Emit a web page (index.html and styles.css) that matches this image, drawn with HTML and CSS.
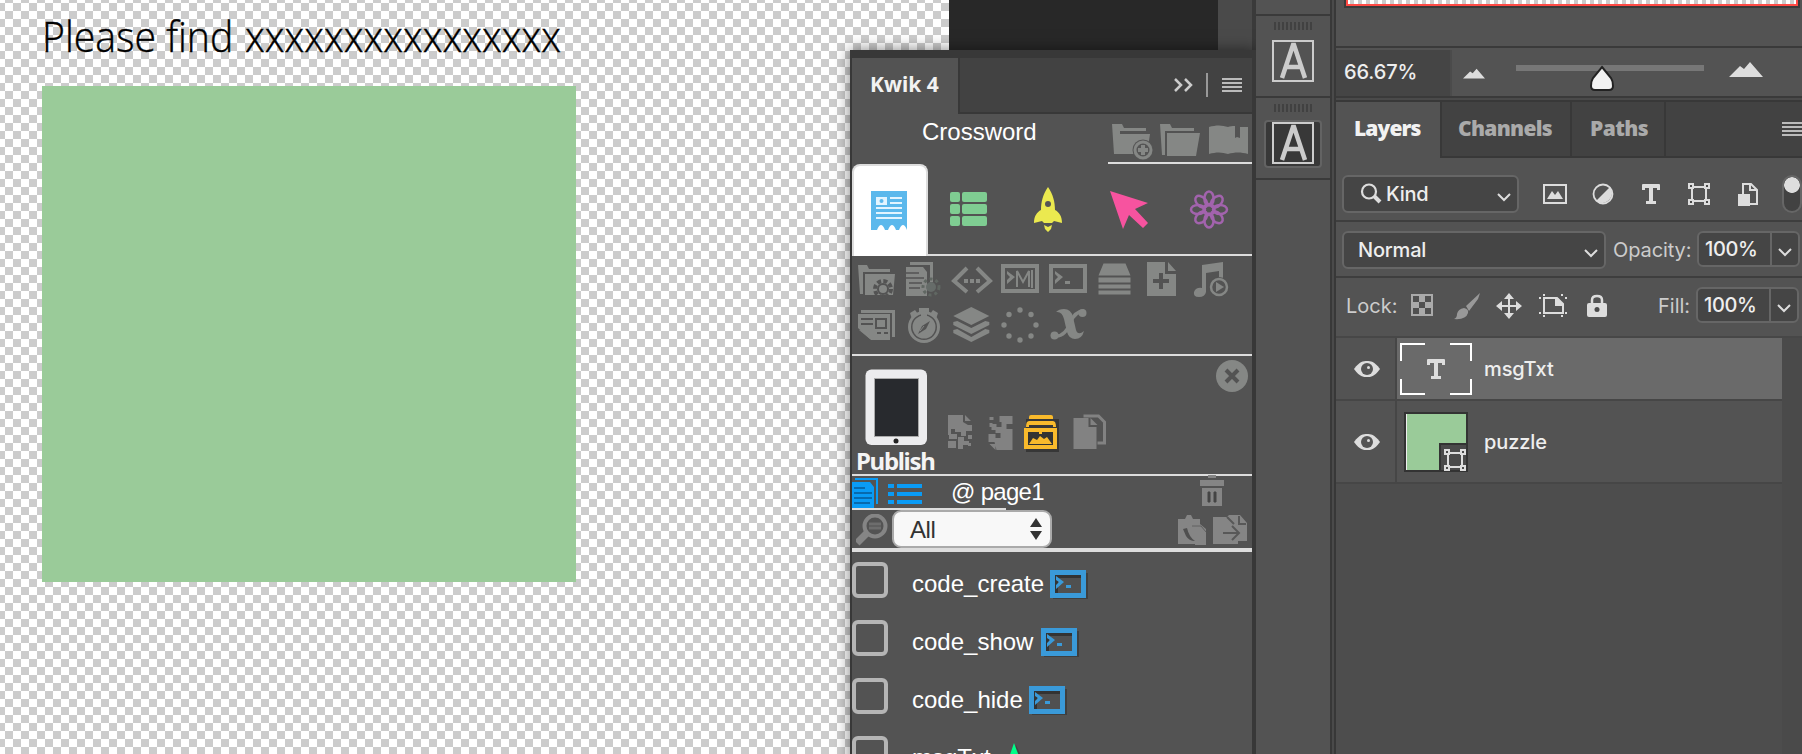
FILE: index.html
```html
<!DOCTYPE html>
<html lang="en">
<head>
<meta charset="utf-8">
<title>Kwik 4 workspace</title>
<link rel="stylesheet" href="styles.css">
</head>
<body>
<svg class="defs" width="0" height="0">
  <symbol id="bounds" viewBox="0 0 22 22"><path d="M4 4h14v14H4z" fill="none" stroke="#ddd" stroke-width="2"/><path d="M1 1h4v4H1zM17 1h4v4h-4zM1 17h4v4H1zM17 17h4v4h-4z" fill="#4a4a4a" stroke="#ddd" stroke-width="2"/></symbol>
  <symbol id="eye" viewBox="0 0 26 18"><path d="M0 9C6 1 9 1 13 1s7 0 13 8c-6 8-9 8-13 8S6 17 0 9z" fill="#ddd"/><circle cx="13" cy="9" r="6" fill="#555"/><circle cx="14.500" cy="7.500" r="1.500" fill="#ddd"/></symbol>
  <symbol id="chev" viewBox="0 0 14 10"><path d="M1 2l6 6 6-6" fill="none" stroke="#ddd" stroke-width="2"/></symbol>
  <symbol id="tee" viewBox="0 0 20 20"><path d="M2 0h16q1 0 1 1v5h-3V4h-4v13h3v3H5v-3h3V4H4v2H1V1q0-1 1-1z" fill="#ddd"/></symbol>
  <symbol id="lines" viewBox="0 0 20 14"><path d="M0 1h20M0 5h20M0 9h20M0 13h20" stroke="#bbb" stroke-width="2"/></symbol>
  <symbol id="term" viewBox="0 0 42 34"><path d="M6 6h35v26H6z" fill="#222" opacity=".4"/><path d="M3 3h36v28H3z" fill="#3a9ad9"/><path d="M8 8h26v18H8z" fill="#505050"/><path d="M8 8h26v3H11v15H8z" fill="#333"/><path d="M9 9l8 6-8 7v-4l3-3-3-2z" fill="#3a9ad9"/><rect x="19" y="18" width="5" height="3" fill="#3a9ad9"/></symbol>
</svg>
<div class="app">
  <main class="canvas">
    <p class="message"><span class="m1">Please find</span><span class="m2">xxxxxxxxxxxxxxxx</span></p>
    <div class="puzzle"></div>
    <div class="backdrop"><div class="backdrop-side"></div></div>
  </main>

  <section class="kwik">
    <header class="kwik-head"><div class="kwik-tab">Kwik 4</div>
      <svg class="more" width="20" height="16" viewBox="0 0 20 16"><path d="M1 2l6 6-6 6M11 2l6 6-6 6" fill="none" stroke="#ccc" stroke-width="2.500"/></svg>
      <i class="sep"></i><svg class="menu" width="20" height="14"><use href="#lines"/></svg>
    </header>
    <div class="project"><span class="project-name">Crossword</span>
      <div class="project-actions">
        <svg width="48" height="42" viewBox="0 0 48 42"><g fill="#858785"><path d="M4 4h10l2 4h22v3H12v23H6z"/><path d="M12 14h30l-3 20H12z"/><circle cx="35" cy="30" r="10.500" fill="#555"/><circle cx="35" cy="30" r="8" fill="none" stroke="#858785" stroke-width="3"/><path d="M33 25h4v3h3v4h-3v3h-4v-3h-3v-4h3z"/></g></svg>
        <svg width="48" height="42" viewBox="0 0 48 42"><g fill="#858785"><path d="M4 4h10l2 4h22v3H9v24H6z"/><path d="M11 13h33l-4 23H11z"/></g></svg>
        <svg width="48" height="42" viewBox="0 0 48 42"><path d="M5 7c7-2 13-2 19 0 2-1 4-1 7-1v12l2-1 3 1V7h8v27c-7-2-13-2-20 0-6-2-12-2-19 0z" fill="#858785"/></svg>
      </div>
    </div>
    <nav class="tabs">
      <div class="tab on"><svg width="40" height="44" viewBox="1 0 40 44"><path d="M2 2h36v39q-2-5-4-5t-4 5h-3q-2-5-4-5t-4 5h-3q-2-5-4-5t-4 5H2z" fill="#5bb8ec"/><path d="M7 8h11v8H7zM21 8h12v2H21zM21 13h12v2H21zM7 18h26v2H7zM7 23h26v2H7zM7 28h26v2H7z" fill="#e2f4ff"/><circle cx="12.500" cy="12" r="2" fill="#5bb8ec"/></svg></div>
      <div class="tab"><svg width="40" height="44" viewBox="0 0 40 44"><g fill="#7fcd92"><rect x="2" y="5" width="10" height="10" rx="2"/><rect x="14" y="5" width="25" height="10" rx="2"/><rect x="2" y="17" width="10" height="10" rx="2"/><rect x="14" y="17" width="25" height="10" rx="2"/><rect x="2" y="29" width="10" height="10" rx="2"/><rect x="14" y="29" width="25" height="10" rx="2"/></g></svg></div>
      <div class="tab"><svg width="40" height="48" viewBox="0 0 40 48"><path d="M20 2c5 7 7 15 7 23 4 2 7 6 7 13l-8-2-2 2h-8l-2-2-8 2c0-7 3-11 7-13 0-8 2-16 7-23zM16 40l4 2 4-2-1 4-3 3-3-3z" fill="#ebe94f"/><circle cx="20" cy="19" r="3" fill="#555"/></svg></div>
      <div class="tab"><svg width="42" height="44" viewBox="-1 0 42 44"><path d="M2 4l38 12-13 6 13 14-5 5-14-13-6 14z" fill="#f7539f"/></svg></div>
      <div class="tab"><svg width="42" height="42" viewBox="-22 -21.500 42 42"><g fill="none" stroke="#a263ad" stroke-width="2.500"><circle r="5.500"/><ellipse cy="-11" rx="4.600" ry="7"/><ellipse cy="-11" rx="4.600" ry="7" transform="rotate(45)"/><ellipse cy="-11" rx="4.600" ry="7" transform="rotate(90)"/><ellipse cy="-11" rx="4.600" ry="7" transform="rotate(135)"/><ellipse cy="-11" rx="4.600" ry="7" transform="rotate(180)"/><ellipse cy="-11" rx="4.600" ry="7" transform="rotate(225)"/><ellipse cy="-11" rx="4.600" ry="7" transform="rotate(270)"/><ellipse cy="-11" rx="4.600" ry="7" transform="rotate(315)"/></g></svg></div>
    </nav>
    <div class="tools">
      <svg viewBox="0 0 48 46"><path d="M6 9h9l2 4h21v3H11v22H8z"/><path d="M13 18h30l-2 21H13z"/><circle cx="31" cy="33" r="8" fill="none" stroke="#535353" stroke-width="4" stroke-dasharray="4 2.300"/><circle cx="31" cy="33" r="6" fill="#535353"/><circle cx="31" cy="33" r="4"/></svg>
      <svg viewBox="3 0 48 46"><path d="M13 6h23v20h-3V9H13z"/><path d="M9 11h17l4 5v24H9z"/><path d="M9 17h13M9 22h18M12 27h13M12 32h11" stroke="#535353" stroke-width="1.500"/><circle cx="34" cy="31" r="5" fill="#666c69"/><circle cx="34" cy="31" r="8" fill="none" stroke="#606762" stroke-width="3" stroke-dasharray="3 3"/></svg>
      <svg viewBox="0 0 48 46"><path d="M19 12L6 25l13 11M29 12l13 13-13 11" fill="none" stroke="#858785" stroke-width="4"/><path d="M16 23h4v4h-4zM22 23h4v4h-4zM28 23h4v4h-4z"/></svg>
      <svg viewBox="0 0 48 46"><path d="M7 10h34v25H7z" fill="none" stroke="#858785" stroke-width="4"/><path d="M11 15l8 6-8 7v-4l3-3-3-3z"/><path d="M21 31V15l6 11 6-11v16M36 14v18" fill="none" stroke="#858785" stroke-width="2"/></svg>
      <svg viewBox="0 0 48 46"><path d="M7 10h34v25H7z" fill="none" stroke="#858785" stroke-width="4"/><path d="M11 15l8 6-8 7v-4l3-3-3-3zM21 25h5v3h-5z"/></svg>
      <svg viewBox="1.500 .5 48 46"><path d="M13 8h22l5 12H8zM8 22h32v5H8zM8 29h32v4H8zM8 35h32v4H8z"/></svg>
      <svg viewBox="1 0 48 46"><path d="M8 6h18v12h11v22H8zM29 6l8 9h-8z"/><path d="M22 17v16M14 25h16" stroke="#535353" stroke-width="4"/></svg>
      <svg viewBox="1 0 48 46"><path d="M15 9l21-3v21h-4V15l-13 2v19q-1 5-7 5t-5-5q2-5 8-4z"/><circle cx="32" cy="31" r="10" fill="#535353"/><circle cx="32" cy="31" r="8" fill="none" stroke="#858785" stroke-width="2.500"/><path d="M29 26l8 5-8 5z"/></svg>
      <svg viewBox="0 0 48 46"><path d="M9 8h34v27h-3V11H9z"/><path d="M6 12h32v26H19L6 26z"/><path d="M9 17h12M9 22h12M24 17h10v9H24zM25 31h4M32 31h4" fill="none" stroke="#535353" stroke-width="2"/><path d="M7 28l10 1 1 8"/></svg>
      <svg viewBox="0 0 48 46"><path d="M19 6h10v4h-2v4h-6v-4h-2zM10 11l5-3 3 4-6 5zM38 11l-5-3-3 4 6 5z"/><circle cx="24" cy="25" r="14.500" fill="none" stroke="#858785" stroke-width="3"/><circle cx="24" cy="25" r="11.500"/><path d="M30 19l-4 8-8 5 4-8z" fill="#535353"/><path d="M24 24l-4 5" stroke="#858785"/></svg>
      <svg viewBox=".7 0 48 46"><path d="M24 5l18 9-18 9-18-9zM6 20l4-1 14 7 14-7 4 1v3l-18 9-18-9zM6 28l4-1 14 8 14-8 4 1v3l-18 9-18-9z"/></svg>
      <svg viewBox="0 0 48 46"><circle cx="24" cy="8" r="2.700"/><circle cx="35" cy="12.500" r="2.700"/><circle cx="40" cy="23" r="2.700"/><circle cx="35" cy="34" r="2.700"/><circle cx="24" cy="38" r="2.700"/><circle cx="13" cy="34" r="2.700"/><circle cx="8" cy="23" r="2.700"/><circle cx="13" cy="12.500" r="2.700"/></svg>
      <svg viewBox="0 0 48 46"><path d="M12 10q3-3 8-3 7 0 9 8l3 13q2 6 8 1-2 8-9 8-6 0-8-7l-3-13q-2-8-8-7z"/><path d="M40 9q-9 0-14 12-5 14-15 13" fill="none" stroke="#858785" stroke-width="3.500"/><circle cx="38.500" cy="11" r="4"/><circle cx="10.500" cy="33.500" r="4"/></svg>
    </div>
    <div class="publish">
      <div class="publish-btn"><svg width="64" height="78" viewBox="0 0 64 78"><rect x="1.500" y="1.500" width="61.500" height="75.500" rx="6" fill="#ececee"/><rect x="10" y="10" width="45" height="59" fill="#aaa"/><rect x="11" y="11" width="43" height="57" fill="#282a2e"/><circle cx="32" cy="73" r="2.500" fill="#222"/></svg><b>Publish</b></div>
      <div class="publish-icons">
        <svg width="40" height="40" viewBox="0 0 40 40"><path d="M8 2h15v7l5 3h4v6h-6v5h-5v-4h-6v-3h-4v5h6v5H9v-4H8zM25 2l6 6h-6zM8 28h8v7H8zM18 24h6v4h5v4h-6v4h-5zM28 22h4v4h-4zM28 30h3v3h-3z" fill="#828282"/></svg>
        <svg width="35" height="40" viewBox="-1.500 0 35 40"><path d="M18 3h13v8h-6v5h6v21H15l-2-8H7v-8h7v4h5v-5h-5v-3h-4v-6h5v3h5V9h-2zM8 4h4v3H8zM8 10h3v4H8zM8 31h6v6z" fill="#828282"/></svg>
        <svg width="52" height="42" viewBox="1 0 52 42"><path d="M12 6h33v33H12z" fill="#252525" opacity=".6"/><path d="M15 4q0-2 2-2h20q2 0 2 2v2H15zM12 14q0-6 3-6h24q3 0 3 6h-3v-2H15v2zM10 15h33v21H10z" fill="#f9ba2c"/><path d="M14 19h25v13H14z" fill="#333"/><path d="M15 31l4-6 4 2 3-4 4 3 3-2 5 7zM25 19h3v2h-3z" fill="#f9ba2c"/></svg>
        <svg width="42" height="40" viewBox="-1.500 0 42 40"><path d="M5 5h15v9h8v22H5zM22 5l7 7h-7z" fill="#828282"/><path d="M15 3h15l6 6v21h-7" fill="none" stroke="#828282" stroke-width="3"/></svg>
      </div>
      <svg class="close" width="32" height="32" viewBox="0 0 32 32"><circle cx="16" cy="16" r="16" fill="#858785"/><path d="M10 10l12 12M22 10L10 22" stroke="#535353" stroke-width="4"/></svg>
    </div>
    <div class="page-row">
      <svg width="26" height="30" viewBox="0 0 26 30"><path d="M3 0h23v26h-2V2H3z" fill="#0a9bf5"/><path d="M0 4h18l4 5v21H0z" fill="#0a9bf5"/><path d="M2 10h11M2 15h18M2 20h18M2 25h16" stroke="#075b96" stroke-width="1.300"/></svg>
      <svg class="list-icon" width="34" height="20" viewBox="0 0 34 20"><path d="M0 2h6M9 2h25M0 10h6M9 10h25M0 18h6M9 18h25" stroke="#0a9bf5" stroke-width="4"/></svg>
      <span class="page-name">@ page1</span>
      <svg class="trash" width="24" height="32" viewBox="0 0 24 32"><path d="M0 6h24v6H0zM8 1h8v3H8zM2 14h20v18H2z" fill="#858585"/><path d="M8 18h2v10H8zM14 18h2v10h-2z" fill="#444" stroke="#444"/></svg>
    </div>
    <i class="half-line"></i>
    <div class="filter-row">
      <svg class="find" width="34" height="32" viewBox="1 1 34 32"><circle cx="20" cy="13" r="10.500" fill="none" stroke="#858585" stroke-width="4"/><path d="M12 20L2 30" stroke="#858585" stroke-width="7"/><path d="M14 11h12M14 15h12" stroke="#6d6d6d" stroke-width="3"/></svg>
      <div class="select">All<svg width="12" height="24" viewBox="0 0 12 24"><path d="M0 10L6 1l6 9zM0 14h12L6 23z" fill="#333"/></svg></div>
      <svg class="paste" width="30" height="34" viewBox="0 0 30 34"><path d="M1 5h7l2-4h4l2 4h7v5l6 5v16H18v-1H1z" fill="#858585"/><path d="M6 15l3 7q3 5 9 5-6-4-8-13z" fill="#505050"/><path d="M15 12h9l5 6" fill="none" stroke="#606060"/></svg>
      <svg class="export" width="34" height="34" viewBox="0 0 34 34"><path d="M0 3h14l2-2h11l7 8v18h-9v3H0z" fill="#858585"/><path d="M10 19h15M19 12l7 7-7 7M14 3l7 7M26 2v8h7" fill="none" stroke="#585858" stroke-width="2"/></svg>
    </div>
    <ul class="items">
      <li><i class="box"></i><span>code_create</span><svg width="42" height="34"><use href="#term"/></svg></li>
      <li><i class="box"></i><span>code_show</span><svg class="show-icon" width="42" height="34"><use href="#term"/></svg></li>
      <li><i class="box"></i><span>code_hide</span><svg width="42" height="34"><use href="#term"/></svg></li>
      <li><i class="box"></i><span>msgTxt</span><svg class="green" width="42" height="34" viewBox="0 0 42 34"><path d="M20 2L10 32h5l2-6h10l2 6h5z" fill="#333" opacity=".5"/><path d="M18 0L7 32h6l2-6h7l2 6h6z" fill="#0f8"/></svg></li>
    </ul>
  </section>

  <aside class="strip">
    <div class="strip-top"></div>
    <div class="strip-cell"><i class="grip"></i><div class="glyph"><svg width="42" height="42" viewBox="0 0 42 42"><path d="M1 1h40v40H1z" fill="none" stroke="#ccc" stroke-width="2"/><path d="M10 38L21 5h1l11 33M14 27h15" fill="none" stroke="#ccc" stroke-width="4.500"/></svg></div></div>
    <div class="strip-cell"><i class="grip"></i><div class="glyph sel"><svg width="42" height="42" viewBox="0 0 42 42"><path d="M1 1h40v40H1z" fill="none" stroke="#ccc" stroke-width="2"/><path d="M10 38L21 5h1l11 33M14 27h15" fill="none" stroke="#ccc" stroke-width="4.500"/></svg></div></div>
  </aside>
  <div class="gutter"></div>

  <aside class="dock">
    <div class="nav"><div class="nav-view"></div></div>
    <div class="zoom"><div class="zoom-value">66.67%</div>
      <svg class="small-m" width="22" height="12" viewBox="0 0 34 16"><path d="M0 15L11 4l4 3 6-7 13 15z" fill="#ddd"/></svg>
      <div class="slider"><svg class="thumb" width="26" height="28" viewBox="0 0 26 28"><path d="M13 2l9 11q2 3 2 8 0 4-4 4H6q-4 0-4-4 0-5 2-8z" fill="#f2f2f2" stroke="#222" stroke-width="2"/></svg></div>
      <svg class="big-m" width="34" height="16" viewBox="0 0 34 16"><path d="M0 15L11 4l4 3 6-7 13 15z" fill="#ddd"/></svg>
    </div>
    <div class="dock-gap"></div>
    <div class="dock-tabs"><b class="t1">Layers</b><b class="t2">Channels</b><b class="t3">Paths</b><svg width="20" height="14"><use href="#lines"/></svg></div>
    <div class="row kind-row">
      <div class="field kind"><svg width="22" height="22" viewBox="0 0 22 22"><circle cx="9" cy="8.500" r="7" fill="none" stroke="#ddd" stroke-width="2.200"/><path d="M14 13l6 6" stroke="#ddd" stroke-width="4"/></svg><span>Kind</span><svg class="ch" width="14" height="10"><use href="#chev"/></svg></div>
      <svg class="k1" width="24" height="20" viewBox="0 0 24 20"><path d="M1 1h22v18H1z" fill="none" stroke="#ddd" stroke-width="2"/><path d="M4 15l5-8 3 4 3-4 5 8z" fill="#ddd"/></svg>
      <svg class="k2" width="22" height="22" viewBox="0 0 22 22"><circle cx="11" cy="11" r="9.500" fill="none" stroke="#ddd" stroke-width="1.800"/><path d="M18 4A10 10 0 0 1 4 18z" fill="#ddd"/></svg>
      <svg class="k3" width="20" height="20"><use href="#tee"/></svg>
      <svg class="k4" width="22" height="22"><use href="#bounds"/></svg>
      <svg class="k5" width="20" height="24" viewBox="0 0 20 24"><path d="M5 11V1h8l6 6v14h-7M12 1v6h6" fill="none" stroke="#ddd" stroke-width="2"/><path d="M0 11h12v12H0z" fill="#ddd"/></svg>
      <div class="toggle"></div>
    </div>
    <div class="row"><div class="field mode"><span>Normal</span><svg class="ch" width="14" height="10"><use href="#chev"/></svg></div>
      <span class="lab opacity">Opacity:</span><div class="field pct"><span>100%</span><svg class="ch" width="14" height="10"><use href="#chev"/></svg></div></div>
    <div class="row last"><span class="lab lock">Lock:</span>
      <svg class="l1" width="22" height="22" viewBox="0 0 22 22"><path d="M0 0h22v22H0z" fill="#aaa"/><path d="M2 2h6v6H2zM14 2h6v6h-6zM8 8h6v6H8zM2 14h6v6H2zM14 14h6v6h-6z" fill="#505050"/></svg>
      <svg class="l2" width="26" height="27" viewBox="0 0 26 27"><path d="M26 0L12 13l3 5L24 6zM10 15q5 1 4 5-2 7-14 6 3-1 3-5 1-5 7-6z" fill="#999"/></svg>
      <svg class="l3" width="26" height="26" viewBox="0 0 26 26"><path d="M13 0l5 6h-4v6h6V8l6 5-6 5v-4h-6v6h4l-5 6-5-6h4v-6H6v4l-6-5 6-5v4h6V6H8z" fill="#ddd"/></svg>
      <svg class="l4" width="28" height="24" viewBox="0 0 28 24"><path d="M5 4h13l6 6v9H5z" fill="none" stroke="#ddd" stroke-width="2"/><path d="M16 4h3l5 6v2h-8zM4 0h2v2H4zM22 0h2v2h-2zM0 3h2v2H0zM26 3h2v2h-2zM0 18h2v2H0zM26 18h2v2h-2zM4 21h2v2H4zM22 21h2v2h-2z" fill="#ddd"/></svg>
      <svg class="l5" width="20" height="24" viewBox="0 0 20 24"><path d="M5 10V6q0-4 5-4t5 4v4" fill="none" stroke="#ddd" stroke-width="2.500"/><rect y="9" width="20" height="14" rx="2" fill="#ddd"/><circle cx="10" cy="15.500" r="2.500" fill="#4a4a4a"/></svg>
      <span class="lab fill">Fill:</span><div class="field pct"><span>100%</span><svg class="ch" width="14" height="10"><use href="#chev"/></svg></div></div>
    <div class="layers">
      <div class="layer active"><div class="eye"><svg width="26" height="18"><use href="#eye"/></svg></div><div class="body"><div class="frame"><svg class="corners" width="72" height="52" viewBox="0 0 72 52"><path d="M25 1H1v17M50 1h21v17M25 51H1V36M50 51h21V36" fill="none" stroke="#fff" stroke-width="2"/></svg><svg width="20" height="20"><use href="#tee"/></svg></div><span>msgTxt</span></div></div>
      <div class="layer second"><div class="eye"><svg width="26" height="18"><use href="#eye"/></svg></div><div class="body"><div class="shape"><div class="badge"><svg width="22" height="22"><use href="#bounds"/></svg></div></div><span>puzzle</span></div></div>
    </div>
  </aside>
</div>
</body>
</html>
```

FILE: styles.css
```css
* { box-sizing: border-box; }
html, body { margin: 0; height: 754px; overflow: hidden; background: #535353; }
body { font-family: Inter, "Liberation Sans", sans-serif; color: #eee; }
svg { display: block; flex: none; }
i { display: block; }
.defs { position: absolute; }
.app { position: relative; display: grid; grid-template-columns: 1256px 74px 6px 466px; height: 754px; overflow: hidden; }

/* document canvas */
.canvas { position: relative; overflow: hidden; padding: 0 0 0 42px; background: repeating-conic-gradient(#ccc 0 25%, #fff 0 50%) -3px 11px / 16px 16px; }
.message { display: flex; margin: 0; height: 86px; color: #000; font: 300 42px/71px "Open Sans", sans-serif; white-space: nowrap; }
.message span { display: block; height: 72px; transform-origin: 0 0; -webkit-text-stroke: .4px #000; }
.m1 { width: 203px; transform: scaleX(.934); }
.m2 { transform: scaleX(.945); }
.puzzle { width: 534px; height: 496px; background: #9acb99; }
.backdrop { position: absolute; left: 949px; top: 0; width: 307px; height: 754px; background: #282828; padding-left: 269px; }
.backdrop-side { height: 100%; width: 38px; background: #4a4a4a; border-right: 4px solid #3a3a3a; }

/* floating Kwik panel */
.kwik { position: absolute; left: 850px; top: 50px; width: 406px; height: 720px; background: #535353; border: solid #383838; border-width: 8px 4px 0 2px; box-shadow: 0 0 14px rgba(0,0,0,.5); }
.kwik-head { display: flex; height: 56px; align-items: center; background: #424242; border-bottom: 2px solid #383838; }
.kwik-tab { width: 108px; height: 56px; margin-bottom: -2px; background: #535353; border-right: 2px solid #383838; font: 700 21px/53px "Noto Sans", sans-serif; padding-left: 18px; color: #f2f2f2; }
.more { margin-left: 214px; }
.sep { width: 2px; height: 24px; background: #999; margin: 0 14px 0 12px; }
.project { display: flex; justify-content: space-between; height: 48px; font: 24px/36px "Liberation Sans", sans-serif; color: #fff; }
.project-name { padding-left: 70px; }
.project-actions { display: flex; height: 50px; padding-top: 6px; width: 144px; border-bottom: 2px solid #ddd; }
.tabs { display: flex; height: 94px; padding-top: 2px; border-bottom: 2px solid #ddd; }
.tab { width: 80px; display: flex; align-items: center; justify-content: center; }
.tab.on { width: 76px; height: 92px; background: #fff; border: 2px solid #ddd; border-bottom: 0; border-radius: 8px 8px 0 0; }
.tools { display: grid; grid-template-columns: repeat(8, 48px); grid-auto-rows: 46px; height: 100px; border-bottom: 2px solid #ddd; }
.tools svg { width: 48px; height: 46px; fill: #858785; }
.publish { display: flex; height: 120px; border-bottom: 2px solid #ddd; }
.publish-btn { width: 88px; padding: 12px 0 0 12px; }
.publish-btn b { display: block; margin-left: -8px; font: 700 24px/30px "Noto Sans", sans-serif; color: #f4f4f4; letter-spacing: -1.3px; }
.publish-icons { display: flex; align-items: flex-start; padding-top: 57px; }
.close { margin: 4px 0 0 107px; }
.page-row { display: flex; height: 32px; padding-top: 2px; }
.list-icon { margin: 6px 0 0 10px; }
.page-name { margin-left: 29px; width: 100px; font: 24px/27px "Liberation Sans", sans-serif; color: #fff; white-space: nowrap; letter-spacing: -.7px; }
.trash { margin: -4px 0 0 149px; }
.half-line { width: 154px; height: 2px; background: #ddd; }
.filter-row { display: flex; height: 42px; border-bottom: 4px solid #ddd; }
.find { margin: 4px 0 0 4px; }
.select { display: flex; justify-content: space-between; width: 160px; height: 38px; margin-left: 2px; padding: 5px 8px 0 16px; border: 2px solid #aaa; border-radius: 9px; background: #f8f8f8; color: #333; font: 24px/25px "Liberation Sans", sans-serif; letter-spacing: -.4px; }
.paste { margin: 4px 0 0 125px; }
.export { margin: 4px 0 0 6px; }
.items { list-style: none; margin: 0; padding: 10px 0 0; font: 24px/44px "Liberation Sans", sans-serif; color: #fff; }
.items li { display: flex; height: 58px; }
.items span { margin-left: 24px; }
.items li > svg { margin: 5px 0 0 3px; }
.items li > svg.show-icon { margin-left: 5px; }
.items li > svg.green { margin: 7px 0 0 5px; }
.box { width: 36px; height: 36px; border: 4px solid #b5b5b5; border-radius: 6px; }

/* collapsed panel strip */
.strip { position: relative; z-index: 1; background: #535353; }
.strip-top { height: 16px; border-bottom: 2px solid #3a3a3a; }
.strip-cell { height: 82px; padding-top: 6px; border-bottom: 2px solid #3a3a3a; }
.grip { width: 38px; height: 8px; margin-left: 18px; background: repeating-linear-gradient(90deg, #414141 0 2px, #535353 2px 4px); }
.glyph { width: 58px; height: 48px; margin: 7px 0 0 8px; padding: 3px 8px; border-radius: 4px; }
.glyph.sel { background: #383838; border: 2px solid #636363; margin-top: 8px; padding: 0 6px; }
.gutter { background: linear-gradient(90deg, #383838 0 2px, #4a4a4a 2px 4px, #383838 4px 6px); }

/* docked panels */
.dock { background: #4d4d4d; }
.nav { height: 48px; padding: 0 2px 0 8px; background: #535353; border-bottom: 2px solid #3a3a3a; }
.nav-view { width: 456px; height: 8px; border: solid #3a3a3a; border-width: 0 2px 2px; background: linear-gradient(#ff4a45, #ff4a45) 0 100% / 100% 2px no-repeat, linear-gradient(#ff4a45, #ff4a45) 0 0 / 2px 100% no-repeat, linear-gradient(#ff4a45, #ff4a45) 100% 0 / 2px 100% no-repeat, repeating-linear-gradient(90deg, #fff 0 4px, #ccc 4px 8px); }
.zoom { display: flex; height: 50px; background: #535353; border-bottom: 2px solid #3a3a3a; }
.zoom-value { width: 116px; height: 46px; margin-top: 2px; background: #454545; border-right: 2px solid #4b4b4b; padding-left: 8px; font-size: 20px; font-weight: 500; letter-spacing: -.1px; line-height: 45px; }
.small-m { margin: 20px 0 0 11px; }
.slider { position: relative; width: 188px; height: 6px; margin: 17px 0 0 31px; background: #777; }
.thumb { position: absolute; left: 73px; top: 0; }
.big-m { margin: 14px 0 0 25px; }
.dock-gap { height: 2px; background: #4a4a4a; }
.dock-tabs { display: flex; height: 58px; border-top: 2px solid #383838; border-bottom: 2px solid #383838; background: #424242; font: 700 21px/53px "Noto Sans", sans-serif; color: #aaa; }
.dock-tabs b { height: 54px; padding-left: 18px; border-right: 2px solid #383838; letter-spacing: -.9px; }
.dock-tabs .t1 { width: 106px; height: 56px; background: #535353; margin-bottom: -2px; color: #f2f2f2; }
.dock-tabs .t2 { width: 130px; padding-left: 16px; letter-spacing: -.7px; }
.dock-tabs .t3 { width: 94px; letter-spacing: -.6px; }
.dock-tabs svg { margin: 20px 0 0 116px; }
.row { display: flex; height: 56px; background: #535353; border-bottom: 2px solid #3e3e3e; padding: 9px 0 0 6px; font-size: 20px; font-weight: 500; }
.kind-row { height: 64px; padding-top: 17px; }
.row.last { height: 60px; border-bottom-color: #474747; }
.field { display: flex; align-items: center; height: 38px; border: 2px solid #666; border-radius: 6px; background: #454545; flex: none; }
.field .ch { margin-left: auto; margin-right: 6px; margin-top: 5px; }
.kind { width: 177px; padding-left: 16px; }
.kind span { margin-left: 4px; letter-spacing: -.3px; }
.mode { width: 264px; padding-left: 14px; letter-spacing: -.2px; }
.lab { line-height: 38px; color: #ccc; white-space: nowrap; font-weight: 400; }
.opacity { width: 84px; margin-left: 7px; letter-spacing: -.1px; }
.pct { width: 103px; height: 36px; padding-left: 6px; background: linear-gradient(#666, #666) 71px 0 / 2px 100% no-repeat #454545; letter-spacing: -.4px; }
.kind-row > svg { margin-top: 8px; }
.kind-row > .k1 { margin-left: 24px; margin-top: 9px; }
.k2 { margin-left: 25px; } .kind-row > .k3 { margin-left: 27px; margin-top: 9px; } .k4 { margin-left: 27px; } .k5 { margin-left: 28px; }
.toggle { width: 20px; height: 38px; margin-left: 24px; border: 2px solid #666; border-radius: 10px; background: radial-gradient(circle at 8px 8px, #ddd 0 7.500px, transparent 8.200px) #424242; flex: none; }
.lock { width: 65px; margin-left: 4px; }
.last > svg { margin-top: 7px; }
.last > .l2 { margin-left: 21px; margin-top: 6px; } .last > .l3 { margin-left: 16px; margin-top: 6px; } .l4 { margin-left: 17px; } .l5 { margin-left: 20px; }
.fill { width: 38px; margin-left: 51px; }
.layers { width: 466px; height: 416px; background: linear-gradient(#4a4a4a, #4a4a4a) 446px 0 / 20px 100% no-repeat #4d4d4d; font-size: 20px; font-weight: 500; }
.layer { display: flex; width: 446px; height: 63px; border-bottom: 2px solid #464646; background: #535353; }
.layer.second { height: 83px; }
.eye { width: 61px; border-right: 2px solid #464646; display: flex; align-items: center; padding-left: 18px; }
.body { display: flex; align-items: center; flex: 1; padding-left: 3px; letter-spacing: -.1px; }
.active .body { background: #6a6a6a; }
.frame { position: relative; width: 72px; height: 52px; display: flex; align-items: center; justify-content: center; }
.corners { position: absolute; left: 0; top: 0; }
.frame + span { margin-left: 12px; }
.shape { width: 64px; height: 60px; margin: 0 16px 0 4px; padding: 29px 0 0 33px; border: 2px solid #333; background: #9acb99; box-shadow: inset 1px 0 #eee; }
.badge { width: 27px; height: 27px; padding: 4px 0 0 3px; border: solid #333; border-width: 2px 0 0 2px; background: #4a4a4a; }
```
